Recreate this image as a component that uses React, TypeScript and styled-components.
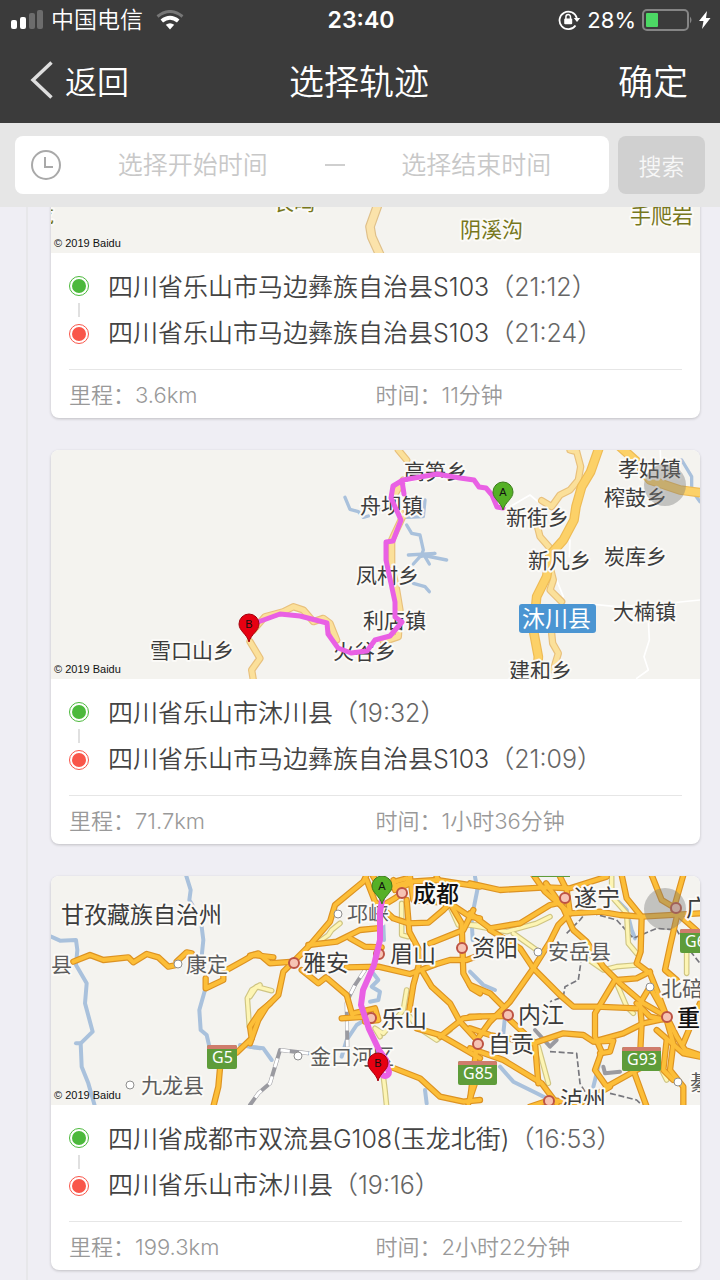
import React from 'react';
import styled, { createGlobalStyle } from 'styled-components';

const sans = '"Inter", "Noto Sans CJK SC", sans-serif';
const cjk = '"Noto Sans CJK SC", sans-serif';

const GlobalStyle = createGlobalStyle`
  *, *::before, *::after { box-sizing: border-box; }
  body { margin: 0; background: #efeef4; font-family: ${sans}; font-weight: 350; }
  button, input { font-family: inherit; font-weight: inherit; }
`;

const Screen = styled.div`
  display: flex;
  flex-direction: column;
  height: 100vh;
  overflow: hidden;
`;

/* ---------- header ---------- */

const Header = styled.header`
  flex: none;
  background: #3b3b3b;
  color: #fff;
`;

const Columns = styled.div`
  display: grid;
  grid-template-columns: 1fr auto 1fr;
  align-items: center;
`;

const StatusBar = styled(Columns)`
  height: 40px;
  padding: 0 9px 0 11px;
  font-size: 23px;
  line-height: 40px;
`;

const NavBar = styled(Columns)`
  height: 83px;
  padding: 0 32px 4px 30px;
`;

const Side = styled.div<{ $end?: boolean; $gap: number }>`
  display: flex;
  align-items: center;
  justify-content: ${(p) => (p.$end ? 'flex-end' : 'flex-start')};
  gap: ${(p) => p.$gap}px;
`;

const Carrier = styled.span`
  margin-right: 6px;
`;

const Percent = styled.span`
  font-size: 22px;
  font-weight: 400;
`;

const Clock = styled.time`
  font-size: 23px;
  font-weight: 600;
`;

const Title = styled.h1`
  margin: 0;
  font-size: 35px;
  font-weight: 350;
`;

const NavButton = styled.button<{ $size: number }>`
  display: flex;
  align-items: center;
  gap: 12px;
  padding: 0;
  border: 0;
  background: none;
  color: #fff;
  font-size: ${(p) => p.$size}px;
`;

/* ---------- search ---------- */

const SearchBar = styled.form`
  display: flex;
  flex: none;
  gap: 9px;
  padding: 13px 15px;
  background: #e6e6e6;
`;

const RangeBox = styled.div`
  display: flex;
  flex: 1;
  align-items: center;
  min-width: 0;
  height: 58px;
  padding: 0 1px 0 16px;
  border-radius: 8px;
  background: #fff;
`;

const RangeInput = styled.input`
  flex: 1;
  min-width: 0;
  height: 100%;
  padding: 0;
  border: 0;
  background: none;
  color: #444;
  font-size: 25px;
  text-align: center;
  &::placeholder { color: #c8c8c8; opacity: 1; }
`;

const Dash = styled.span`
  width: 20px;
  height: 2px;
  background: #cfcfcf;
`;

const SearchButton = styled.button`
  width: 87px;
  height: 58px;
  padding: 0;
  border: 0;
  border-radius: 8px;
  background: #d0d0d0;
  color: #f7f7f7;
  font-size: 23px;
`;

/* ---------- track list ---------- */

const Viewport = styled.main`
  flex: 1;
  min-height: 0;
  overflow: hidden;
  padding: 0 20px 0 26px;
`;

const TrackList = styled.ol<{ $scrolled: number }>`
  display: flex;
  flex-direction: column;
  gap: 32px;
  margin: ${(p) => -p.$scrolled}px 0 0;
  padding: 0 0 32px 23px;
  border-left: 2px solid #e7e7ea;
  list-style: none;
`;

const Card = styled.li`
  overflow: hidden;
  border-radius: 8px;
  background: #fff;
  box-shadow: 0 1px 3px rgba(0, 0, 0, 0.2);
`;

const MapSvg = styled.svg`
  display: block;
  width: 100%;
  height: 229px;
  background: #f4f3ef;
  font-family: ${cjk};
`;

const Route = styled.div`
  display: flex;
  gap: 19px;
  padding: 11px 18px 13px;
`;

const Markers = styled.div`
  display: flex;
  flex-direction: column;
  align-items: center;
  gap: 7px;
  padding-top: 12px;
`;

const Dot = styled.span<{ $color: string }>`
  width: 20px;
  height: 20px;
  padding: 2px;
  border: 1px solid ${(p) => p.$color};
  border-radius: 50%;
  background: ${(p) => p.$color};
  background-clip: content-box;
`;

const Link = styled.span`
  width: 2px;
  height: 14px;
  background: #e0e0e0;
`;

const Stops = styled.div`
  flex: 1;
  min-width: 0;
`;

const Stop = styled.p`
  margin: 0;
  color: #444;
  font-size: 25px;
  line-height: 46px;
  white-space: nowrap;
`;

const StopTime = styled.span`
  color: #666;
`;

const Stats = styled.div`
  display: grid;
  grid-template-columns: 1fr 1fr;
  margin: 0 18px;
  padding-top: 2px;
  border-top: 1px solid #e6e6e6;
  color: #999;
  font-size: 22px;
  line-height: 46px;
`;

/* ---------- icons ---------- */

const SignalIcon = () => (
  <svg width="33" height="20" viewBox="0 0 33 20" fill="#fff" aria-hidden="true">
    <rect x="0" y="10" width="6" height="9" rx="2" />
    <rect x="9" y="7" width="6" height="12" rx="2" />
    <rect x="18" y="3" width="6" height="16" rx="2" fill="#6c6c6c" />
    <rect x="26" y="0" width="6" height="19" rx="2" fill="#6c6c6c" />
  </svg>
);

const WifiIcon = () => (
  <svg width="28" height="20" viewBox="0 0 28 20" fill="none" aria-hidden="true">
    <path d="M1.5 6.5Q14-3.500 26.500 6.500" stroke="#777" strokeWidth="3" />
    <path d="M5.800 11Q14 4.500 22.200 11" stroke="#fff" strokeWidth="4" />
    <path d="M9.800 14.800Q14 11.500 18.200 14.800L14 19.500z" fill="#fff" />
  </svg>
);

const RotationLockIcon = () => (
  <svg width="23" height="22" viewBox="0 0 23 22" fill="none" stroke="#fff" strokeWidth="1.800" aria-hidden="true">
    <path d="M17.500 16.500A8.800 8.800 0 1 1 18.800 9" />
    <path d="M15.800 9h6.400l-3.200 4z" fill="#fff" stroke="none" />
    <rect x="6.200" y="9.500" width="8" height="5.800" rx="1" fill="#fff" stroke="none" />
    <path d="M7.900 10V7.900a2.300 2.300 0 0 1 4.600 0V10" strokeWidth="1.500" />
  </svg>
);

const BatteryIcon = () => (
  <svg width="51" height="22" viewBox="0 0 51 22" fill="none" aria-hidden="true">
    <rect x="1" y="1" width="45" height="20" rx="4" stroke="#858585" strokeWidth="2" />
    <rect x="4" y="4" width="12" height="14" rx="1" fill="#4cd964" />
    <path d="M48 7.500q3 3.500 0 7z" fill="#858585" />
  </svg>
);

const BoltIcon = () => (
  <svg width="12" height="18" viewBox="0 0 12 18" fill="#fff" aria-hidden="true">
    <path d="M8 0L0 10h4.500L3 18l8.500-11H7z" />
  </svg>
);

const BackIcon = () => (
  <svg width="23" height="38" viewBox="0 0 23 38" fill="none" stroke="#dedede" strokeWidth="3.500" aria-hidden="true">
    <path d="M21.500 1.500L3 19l18.500 17.500" />
  </svg>
);

const TimeIcon = () => (
  <svg width="30" height="30" viewBox="0 0 30 30" fill="none" stroke="#a9a9a9" strokeWidth="2" aria-hidden="true">
    <circle cx="15" cy="15" r="14" />
    <path d="M14 7v10h8" />
  </svg>
);

/* ---------- map drawing ---------- */

/* Lines are given per tile, in tile units of a third of a map unit. */
type Tile = { at: [number, number]; lines: string[] };
type StrokeProps = { tiles: Tile[]; color: string; width: number; casing?: string; dash?: string };

const Strokes = ({ tiles, color, width, casing, dash }: StrokeProps) => {
  const pass = (stroke: string, w: number) =>
    tiles.map((t, i) => (
      <g key={stroke + i} transform={`translate(${t.at[0]} ${t.at[1]}) scale(.33333)`}>
        {t.lines.map((l) => (
          <polyline
            key={l}
            points={l}
            fill="none"
            stroke={stroke}
            strokeWidth={w}
            strokeLinejoin="round"
            strokeLinecap={dash ? 'butt' : 'round'}
            strokeDasharray={dash}
          />
        ))}
      </g>
    ));
  return (
    <>
      {casing && pass(casing, width + 7)}
      {pass(color, width)}
    </>
  );
};

type LabelProps = { x: number; y: number; size?: number; color?: string; weight?: number; children: string };

const Label = ({ x, y, size = 21, color = '#3c3c3c', weight = 400, children }: LabelProps) => (
  <text
    x={x}
    y={y + Math.round(size * 0.36)}
    fontSize={size}
    fontWeight={weight}
    fill={color}
    stroke="#fbfaf7"
    strokeWidth="4"
    strokeLinejoin="round"
    paintOrder="stroke"
  >
    {children}
  </text>
);

const Pin = ({ x, y, name }: { x: number; y: number; name: 'A' | 'B' }) => (
  <g transform={`translate(${x} ${y})`}>
    <path
      d="M0 18C-2 10-10 7-10 0A10 10 0 0 1 10 0C10 7 2 10 0 18z"
      fill={name === 'A' ? '#55b026' : '#e60012'}
      stroke={name === 'A' ? '#3b7d1c' : '#a3000c'}
    />
    <text y="4" fontSize="11" fontWeight="400" textAnchor="middle" fill="#111" fontFamily="Liberation Sans, sans-serif">
      {name}
    </text>
  </g>
);

const Copyright = ({ y }: { y: number }) => (
  <text x="54" y={y} fontSize="11" fontWeight="400" fill="#111" fontFamily="Liberation Sans, sans-serif">
    © 2019 Baidu
  </text>
);

const Shield = ({ x, y, w, name }: { x: number; y: number; w: number; name: string }) => (
  <g>
    <rect x={x} y={y} width={w} height="24" rx="2" fill="#5e9c3a" />
    <path d={`M${x} ${y + 4}v-2q0-2 2-2h${w - 4}q2 0 2 2v2z`} fill="#cf7c6c" />
    <text x={x + 5} y={y + 18} fontSize="16" fontWeight="400" fill="#fff" fontFamily="Noto Sans, sans-serif">
      {name}
    </text>
  </g>
);

const City = ({ x, y, major }: { x: number; y: number; major?: boolean }) => (
  <circle
    cx={x}
    cy={y}
    r={major ? 5 : 4}
    fill={major ? '#f6c3b4' : '#fff'}
    stroke={major ? '#bd5344' : '#8f8f8f'}
    strokeWidth={major ? 2 : 1}
  />
);

const ValleyMap = () => (
  <MapSvg viewBox="51 24 649 229" preserveAspectRatio="xMidYMid slice" role="img" aria-label="轨迹地图">
    <Strokes
      tiles={[{ at: [360, 200], lines: ['60,-60 55,10 30,80 35,110 62,170'] }]}
      color="#fbe3ab"
      width={22}
      casing="#dfc08a"
    />
    <Label x={460} y={229} color="#77771c">阴溪沟</Label>
    <Label x={630} y={215} color="#77771c">手爬岩</Label>
    <Label x={273} y={202} color="#77771c">长鸣</Label>
    <Label x={33} y={214} color="#77771c">龙</Label>
    <Copyright y={247} />
  </MapSvg>
);

const MuchuanMap = () => (
  <MapSvg viewBox="51 450 649 229" preserveAspectRatio="xMidYMid slice" role="img" aria-label="轨迹地图">
    <Strokes
      tiles={[
        {
          at: [370, 440],
          lines: [
            '420,200 480,165 510,190',
            '600,300 598,350',
            '560,420 580,470',
            '660,492 740,500 870,492 990,480',
            '835,540 838,600 822,650 835,690 800,715',
            '870,10 872,60',
          ],
        },
      ]}
      color="#fff"
      width={5}
    />
    <Strokes
      tiles={[
        { at: [40, 440], lines: ['915,172 930,208 955,215 970,232 985,228'] },
        {
          at: [370, 440],
          lines: [
            '110,255 125,280 150,285 160,330 155,345 230,360',
            '115,345 195,340 150,350 130,372',
            '165,180 160,230 110,232',
            '165,350 178,372',
            '130,430 165,440 178,455',
            '5,205 40,210',
            '935,60 965,110 965,150 990,185',
          ],
        },
      ]}
      color="#a9c1dc"
      width={10}
    />
    <Strokes
      tiles={[
        {
          at: [40, 440],
          lines: [
            '630,605 660,655 635,690 640,720',
            '640,570 675,530 730,515 760,500 790,510 820,545 850,535 870,550 890,600',
          ],
        },
        {
          at: [370, 440],
          lines: [
            '85,30 110,60',
            '600,30 620,35 632,80 625,120 600,150 570,165 545,200 515,182',
            '500,250 510,290 545,330',
            '540,380 545,400 550,420 540,450 575,485',
            '545,580 548,610 565,640 550,690',
            '100,120 70,170 98,230 65,300 65,380 80,450 90,510 85,590 40,605',
          ],
        },
      ]}
      color="#fbe09a"
      width={15}
      casing="#e8c07c"
    />
    <Strokes
      tiles={[
        {
          at: [370, 440],
          lines: [
            '690,15 662,95 635,140 618,200 612,240 580,300 540,345 530,410 500,470 490,570 505,650 500,730',
            '750,20 800,65 840,120 930,150 990,158',
          ],
        },
      ]}
      color="#fcd168"
      width={22}
      casing="#eebb55"
    />
    <Label x={404} y={471}>高笋乡</Label>
    <Label x={360} y={505}>舟坝镇</Label>
    <Label x={506} y={517}>新街乡</Label>
    <Label x={618} y={468}>孝姑镇</Label>
    <Label x={604} y={497}>榨鼓乡</Label>
    <Label x={528} y={560}>新凡乡</Label>
    <Label x={604} y={556}>炭库乡</Label>
    <Label x={356} y={575}>凤村乡</Label>
    <Label x={363} y={620}>利店镇</Label>
    <Label x={613} y={611}>大楠镇</Label>
    <Label x={333} y={651}>火谷乡</Label>
    <Label x={150} y={650}>雪口山乡</Label>
    <Label x={509} y={670}>建和乡</Label>
    <rect x="519" y="604" width="77" height="29" rx="3" fill="#4b95d2" />
    <text x="522" y="627" fontSize="23" fontWeight="400" fill="#fff">沐川县</text>
    <g fill="none" stroke="#e960e4" strokeWidth="5" strokeLinejoin="round" strokeLinecap="round">
      <polyline points="258,622 280,614 300,616 327,623 328,634 338,648 351,653 367,651 375,640 390,636 402,622 395,617 395,602 386,560 386,542 393,541 401,520 391,498 393,486 403,480 437,474 460,478 474,480 479,487 486,488 492,495 497,507 503,508" />
      <polyline points="402,481 404,494" />
    </g>
    <Pin x={503} y={492} name="A" />
    <Pin x={249} y={624} name="B" />
    <circle cx="665" cy="485" r="21" fill="#777" fillOpacity=".4" />
    <Copyright y={673} />
  </MapSvg>
);

const BasinMap = () => (
  <MapSvg viewBox="51 876 649 229" preserveAspectRatio="xMidYMid slice" role="img" aria-label="轨迹地图">
    <Strokes
      tiles={[
        {
          at: [40, 870],
          lines: [
            '438,15 452,60 448,90 460,110',
            '485,170 490,210 485,260',
            '33,200 60,212 108,210 112,240 108,285 140,340 135,400 158,485 122,520 125,590 145,640 165,710',
            '122,520 108,520',
            '495,360 478,420 482,480 500,495 507,525',
            '600,525 660,535',
          ],
        },
        {
          at: [250, 870],
          lines: [
            '0,530 40,535 65,570',
            '370,310 385,330 365,350 390,365 385,390 360,395',
            '360,440 320,465 290,510 275,560',
            '400,165 402,210',
            '525,660 530,700',
          ],
        },
        {
          at: [470, 870],
          lines: [
            '15,20 22,60 12,110 5,150 8,210',
            '0,305 40,345 75,360',
            '430,80 470,120 485,180 495,205',
            '90,590 130,635 200,670 240,690',
            '105,440 100,490',
            '390,570 370,650',
          ],
        },
      ]}
      color="#a9c1dc"
      width={12}
    />
    <Strokes
      tiles={[
        {
          at: [250, 870],
          lines: ['345,300 315,345 300,375 290,400 292,530', '175,550 90,540 75,590 60,640 25,670 0,705'],
        },
        { at: [470, 870], lines: ['400,590 405,610 450,605', '195,480 240,530 260,510'] },
      ]}
      color="#9a9aa0"
      width={12}
    />
    <Strokes
      tiles={[
        {
          at: [250, 870],
          lines: ['345,300 315,345 300,375 290,400 292,530', '175,550 90,540 75,590 60,640 25,670 0,705'],
        },
      ]}
      color="#fff"
      width={9}
      dash="28 28"
    />
    <Strokes
      tiles={[
        {
          at: [470, 870],
          lines: [
            '290,190 330,150 350,125 440,150 490,205 560,175 620,180 650,230 690,280',
            '335,260 325,330 285,350 280,380 240,395',
            '240,545 320,550 330,640 345,665',
            '420,670 500,690 520,710',
          ],
        },
      ]}
      color="#77777d"
      width={5}
      dash="18 8"
    />
    <Strokes
      tiles={[
        { at: [40, 870], lines: ['660,345 635,360 622,385 628,470'] },
        {
          at: [250, 870],
          lines: [
            '0,380 20,350 65,362',
            '200,220 235,195 245,180 270,160',
            '455,100 455,195 475,200',
            '470,360 460,420 400,490 375,475 390,500',
            '400,620 405,660 410,710',
            '480,440 500,470 560,510 600,480',
            '600,110 625,165 690,165',
          ],
        },
        {
          at: [470, 870],
          lines: [
            '0,165 110,185 200,160 240,140',
            '130,190 200,240',
            '350,265 400,300 440,290 500,285',
            '440,340 470,410 490,430',
            '205,530 235,640',
            '560,570 590,630',
            '425,20 425,80 470,130 475,220 500,250',
            '650,230 650,310',
          ],
        },
      ]}
      color="#fdf5b4"
      width={10}
      casing="#cfc584"
    />
    <Strokes
      tiles={[
        {
          at: [40, 870],
          lines: [
            '100,275 150,255 190,270 265,262 280,277 320,252 355,262 385,290 410,285',
            '410,275 440,247 455,250',
            '560,300 610,272 640,255 700,262',
            '497,325 497,355 550,330 550,310',
            '690,400 660,425 630,470 635,505 590,548',
            '540,595 535,650 520,710',
          ],
        },
        {
          at: [250, 870],
          lines: [
            '0,257 25,250 60,280 130,275 180,225 240,155 255,105 340,35 350,15',
            '130,275 100,305 85,375 50,410 25,450 0,520',
            '175,225 260,215 330,180 380,175',
            '300,205 345,230 395,232',
            '155,300 205,340 228,322 290,375 307,435',
            '275,445 350,440',
            '310,430 375,415 385,450 345,455',
            '290,292 385,290 480,312 560,282 600,270 650,270 690,255',
            '350,30 375,95 430,145 475,160 535,158 580,120 600,100',
            '370,20 395,60 480,35 560,30 690,50',
            '480,20 490,90 600,100 660,140 690,145',
            '430,30 435,60 480,40 470,25 435,35',
            '410,100 435,85 455,70',
            '470,90 478,185 510,245 505,290 490,345 478,420',
            '515,300 545,350 600,400 630,455 690,520',
            '500,475 570,495 690,565',
            '570,500 640,445 690,440',
            '540,220 640,180 670,120',
            '560,20 600,100 635,160 640,310 665,355 690,370',
            '420,590 510,625 570,680 640,695 690,690',
            '690,595 655,700',
          ],
        },
        {
          at: [470, 870],
          lines: [
            '0,40 90,60 230,52 300,55 410,20',
            '228,40 280,115 310,180 350,215 400,290 450,340 520,400 590,440',
            '190,15 225,65 300,130',
            '270,20 290,60 300,130',
            '0,130 60,175 150,160 240,105 285,95',
            '60,180 150,235 190,295 270,375 310,410 380,410 500,415',
            '290,140 265,165 240,215 190,295 120,395 60,455 20,510',
            '0,345 60,370 100,410',
            '0,440 110,438',
            '0,475 60,495 190,520 280,490 340,495 370,515 460,490 520,460 590,445',
            '0,535 100,570 215,640 260,700',
            '120,450 195,520 205,640',
            '20,530 0,690',
            '300,130 390,125 450,135 515,140 690,130',
            '455,15 470,85 515,140 512,245 500,280 540,310 560,360 590,440',
            '545,15 575,90 625,120 600,230 585,300 620,330',
            '640,15 610,120 690,190',
            '435,330 375,430 375,500 395,545 375,600 410,650 500,600 560,570',
            '375,515 430,512 420,545 390,550',
            '440,330 500,325 540,305',
            '590,440 540,350 510,400 515,460 510,560 490,600 530,710',
            '590,440 620,500 645,540 690,555',
            '590,450 540,440 500,400',
            '590,450 610,520 600,600 640,650 640,710',
            '560,480 640,550 690,560',
            '690,400 640,520',
            '590,510 580,600 610,630',
            '180,710 240,690 330,700 420,650',
          ],
        },
      ]}
      color="#fcbe38"
      width={12}
      casing="#dd9322"
    />
    <City x={402} y={893} major />
    <City x={565} y={898} major />
    <City x={294} y={963} major />
    <City x={379} y={954} major />
    <City x={462} y={948} major />
    <City x={371} y={1018} major />
    <City x={508} y={1015} major />
    <City x={478} y={1044} major />
    <City x={667} y={1017} major />
    <City x={549} y={1101} major />
    <City x={676} y={908} major />
    <City x={338} y={914} />
    <City x={178} y={964} />
    <City x={130} y={1085} />
    <City x={298} y={1056} />
    <City x={538} y={952} />
    <City x={650} y={987} />
    <City x={678} y={1082} />
    <Label x={61} y={915} size={23}>甘孜藏族自治州</Label>
    <Label x={413} y={894} size={23} weight={500} color="#111">成都</Label>
    <Label x={574} y={898} size={23}>遂宁</Label>
    <Label x={686} y={908} size={23}>广安</Label>
    <Label x={347} y={913} color="#5c5c5c">邛崃</Label>
    <Label x={303} y={963} size={23}>雅安</Label>
    <Label x={390} y={954} size={23}>眉山</Label>
    <Label x={472} y={948} size={23}>资阳</Label>
    <Label x={548} y={951} color="#5c5c5c">安岳县</Label>
    <Label x={51} y={964} color="#5c5c5c">县</Label>
    <Label x={186} y={964} color="#5c5c5c">康定</Label>
    <Label x={381} y={1019} size={23}>乐山</Label>
    <Label x={518} y={1015} size={23}>内江</Label>
    <Label x={488} y={1044} size={23}>自贡</Label>
    <Label x={661} y={988} color="#5c5c5c">北碚</Label>
    <Label x={677} y={1018} size={23} weight={500} color="#111">重庆</Label>
    <Label x={310} y={1056} color="#5c5c5c">金口河区</Label>
    <Label x={141} y={1085} color="#5c5c5c">九龙县</Label>
    <Label x={560} y={1100} size={23}>泸州</Label>
    <Label x={690} y={1082} color="#5c5c5c">綦江</Label>
    <rect x="532" y="870" width="38" height="7" fill="#5e9c3a" />
    <Shield x={207} y={1045} w={30} name="G5" />
    <Shield x={458} y={1061} w={39} name="G85" />
    <Shield x={622} y={1047} w={39} name="G93" />
    <Shield x={680} y={929} w={39} name="G65" />
    <g fill="none" stroke="#e960e4" strokeWidth="6" strokeLinejoin="round" strokeLinecap="round">
      <polyline points="382,900 380,912 380,940 374,965 363,990 361,1005 369,1029 379,1050 386,1060 388,1070" />
      <circle cx="385" cy="1072" r="4" />
    </g>
    <Pin x={382} y={886} name="A" />
    <Pin x={378} y={1063} name="B" />
    <circle cx="665" cy="909" r="21" fill="#777" fillOpacity=".4" />
    <Copyright y={1099} />
  </MapSvg>
);

/* ---------- page ---------- */

type Place = { name: string; time: string };
type Track = { map: () => React.ReactElement; from: Place; to: Place; distance: string; duration: string };

const tracks: Track[] = [
  {
    map: ValleyMap,
    from: { name: '四川省乐山市马边彝族自治县S103', time: '21:12' },
    to: { name: '四川省乐山市马边彝族自治县S103', time: '21:24' },
    distance: '3.6km',
    duration: '11分钟',
  },
  {
    map: MuchuanMap,
    from: { name: '四川省乐山市沐川县', time: '19:32' },
    to: { name: '四川省乐山市马边彝族自治县S103', time: '21:09' },
    distance: '71.7km',
    duration: '1小时36分钟',
  },
  {
    map: BasinMap,
    from: { name: '四川省成都市双流县G108(玉龙北街)', time: '16:53' },
    to: { name: '四川省乐山市沐川县', time: '19:16' },
    distance: '199.3km',
    duration: '2小时22分钟',
  },
];

const StopLine = ({ place }: { place: Place }) => (
  <Stop>
    {place.name}
    <StopTime>（{place.time}）</StopTime>
  </Stop>
);

const TrackCard = ({ track }: { track: Track }) => (
  <Card>
    <track.map />
    <Route>
      <Markers>
        <Dot $color="#4cb93c" />
        <Link />
        <Dot $color="#f9564a" />
      </Markers>
      <Stops>
        <StopLine place={track.from} />
        <StopLine place={track.to} />
      </Stops>
    </Route>
    <Stats>
      <span>里程：{track.distance}</span>
      <span>时间：{track.duration}</span>
    </Stats>
  </Card>
);

export default function App() {
  return (
    <Screen>
      <GlobalStyle />
      <Header>
        <StatusBar>
          <Side $gap={7}>
            <SignalIcon />
            <Carrier>中国电信</Carrier>
            <WifiIcon />
          </Side>
          <Clock>23:40</Clock>
          <Side $end $gap={6}>
            <RotationLockIcon />
            <Percent>28%</Percent>
            <BatteryIcon />
            <BoltIcon />
          </Side>
        </StatusBar>
        <NavBar>
          <Side $gap={12}>
            <NavButton type="button" $size={32}>
              <BackIcon />
              返回
            </NavButton>
          </Side>
          <Title>选择轨迹</Title>
          <Side $end $gap={12}>
            <NavButton type="button" $size={35}>确定</NavButton>
          </Side>
        </NavBar>
      </Header>
      <SearchBar onSubmit={(e) => e.preventDefault()}>
        <RangeBox>
          <TimeIcon />
          <RangeInput aria-label="开始时间" placeholder="选择开始时间" />
          <Dash />
          <RangeInput aria-label="结束时间" placeholder="选择结束时间" />
        </RangeBox>
        <SearchButton type="submit">搜索</SearchButton>
      </SearchBar>
      <Viewport>
        <TrackList $scrolled={183}>
          {tracks.map((t) => (
            <TrackCard key={t.distance} track={t} />
          ))}
        </TrackList>
      </Viewport>
    </Screen>
  );
}
